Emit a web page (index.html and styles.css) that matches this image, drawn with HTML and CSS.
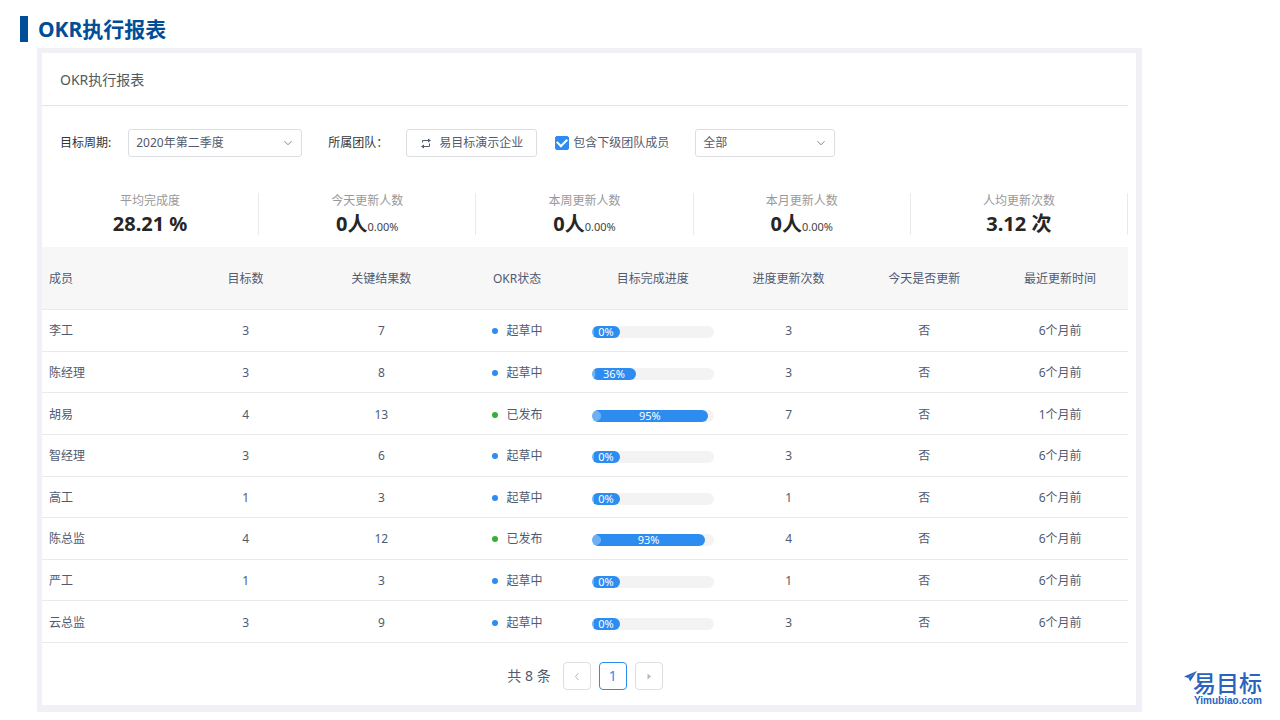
FILE: index.html
```html
<!DOCTYPE html>
<html lang="zh-CN">
<head>
<meta charset="utf-8">
<meta name="viewport" content="width=device-width, initial-scale=1">
<title>OKR执行报表</title>
<link rel="stylesheet" href="styles.css">
</head>
<body>
<div class="page">
  <header class="page-head"><h1 class="page-title">OKR执行报表</h1></header>
  <main class="panel">
    <h2 class="panel-title">OKR执行报表</h2>
    <form class="filters">
      <label class="filter-label" for="period">目标周期:</label>
      <span class="select period">
        <select id="period"><option>2020年第二季度</option></select>
        <svg class="chevron" viewBox="0 0 10 10" aria-hidden="true"><path d="M1.500 3.200 5 6.800 8.500 3.200"/></svg>
      </span>
      <span class="filter-label team-label" id="team-label">所属团队：</span>
      <button class="team" type="button" aria-describedby="team-label">
        <svg class="swap" viewBox="0 0 12 12" aria-hidden="true"><path d="M2.500 5.500v-2H9M3 9.500h6.500v-3"/><path class="solid" d="M8 1.500 11 3.500 8 5.500zM4 7.500 1 9.500 4 11.500z"/></svg>
        <span>易目标演示企业</span>
      </button>
      <label class="check"><input type="checkbox" checked><span>包含下级团队成员</span></label>
      <span class="select scope">
        <select aria-label="范围"><option>全部</option></select>
        <svg class="chevron" viewBox="0 0 10 10" aria-hidden="true"><path d="M1.500 3.200 5 6.800 8.500 3.200"/></svg>
      </span>
    </form>
    <dl class="stats">
      <div class="stat"><dt>平均完成度</dt><dd>28.21 %</dd></div>
      <div class="stat"><dt>今天更新人数</dt><dd>0人<small>0.00%</small></dd></div>
      <div class="stat"><dt>本周更新人数</dt><dd>0人<small>0.00%</small></dd></div>
      <div class="stat"><dt>本月更新人数</dt><dd>0人<small>0.00%</small></dd></div>
      <div class="stat"><dt>人均更新次数</dt><dd>3.12 次</dd></div>
    </dl>
    <table class="report">
      <thead>
        <tr><th>成员</th><th>目标数</th><th>关键结果数</th><th>OKR状态</th><th>目标完成进度</th><th>进度更新次数</th><th>今天是否更新</th><th>最近更新时间</th></tr>
      </thead>
      <tbody>
        <tr><td>李工</td><td>3</td><td>7</td><td><span class="status">起草中</span></td><td><div class="track"><div class="bar" style="width:0%">0%</div></div></td><td>3</td><td>否</td><td>6个月前</td></tr>
        <tr><td>陈经理</td><td>3</td><td>8</td><td><span class="status">起草中</span></td><td><div class="track"><div class="bar" style="width:36%">36%</div></div></td><td>3</td><td>否</td><td>6个月前</td></tr>
        <tr><td>胡易</td><td>4</td><td>13</td><td><span class="status done">已发布</span></td><td><div class="track"><div class="bar" style="width:95%">95%</div></div></td><td>7</td><td>否</td><td>1个月前</td></tr>
        <tr><td>智经理</td><td>3</td><td>6</td><td><span class="status">起草中</span></td><td><div class="track"><div class="bar" style="width:0%">0%</div></div></td><td>3</td><td>否</td><td>6个月前</td></tr>
        <tr><td>高工</td><td>1</td><td>3</td><td><span class="status">起草中</span></td><td><div class="track"><div class="bar" style="width:0%">0%</div></div></td><td>1</td><td>否</td><td>6个月前</td></tr>
        <tr><td>陈总监</td><td>4</td><td>12</td><td><span class="status done">已发布</span></td><td><div class="track"><div class="bar" style="width:93%">93%</div></div></td><td>4</td><td>否</td><td>6个月前</td></tr>
        <tr><td>严工</td><td>1</td><td>3</td><td><span class="status">起草中</span></td><td><div class="track"><div class="bar" style="width:0%">0%</div></div></td><td>1</td><td>否</td><td>6个月前</td></tr>
        <tr><td>云总监</td><td>3</td><td>9</td><td><span class="status">起草中</span></td><td><div class="track"><div class="bar" style="width:0%">0%</div></div></td><td>3</td><td>否</td><td>6个月前</td></tr>
      </tbody>
    </table>
    <nav class="pager" aria-label="分页">
      <span class="total">共 8 条</span>
      <button class="page-btn" type="button" aria-label="上一页" disabled><svg viewBox="0 0 10 10" aria-hidden="true"><path d="M6.500 2 3.500 5.500l3 3.500"/></svg></button>
      <button class="page-btn current" type="button" aria-current="page">1</button>
      <button class="page-btn" type="button" aria-label="下一页" disabled><svg viewBox="0 0 10 10" aria-hidden="true"><path class="solid" d="M3.500 2.500 7 5.500l-3.500 3z"/></svg></button>
    </nav>
  </main>
  <aside class="brand">
    <svg class="plane" viewBox="0 0 13 11" aria-hidden="true"><path d="M13 0 0 5.500l4 1.500zM13 0 4.400 7l1.800 3.500z"/></svg>
    <div class="brand-name">易目标</div>
    <div class="brand-site">Yimubiao.com</div>
  </aside>
</div>
</body>
</html>
```
FILE: styles.css
```css
* { box-sizing: border-box; }

body {
  margin: 0;
  background: #fff;
  color: #515a6e;
  font: 12px/20px "Noto Sans", "Noto Sans CJK SC", sans-serif;
}

button, select, input { font: inherit; color: inherit; margin: 0; }

.page {
  display: grid;
  grid-template-columns: minmax(0, 1fr) 138px;
  grid-template-rows: auto 1fr;
  min-height: 100vh;
  padding: 16px 0 8px 20px;
}

.page-head {
  grid-column: 1 / -1;
  padding-bottom: 6px;
}

.page-title {
  margin: 0;
  padding-left: 10px;
  border-left: 8px solid #004e98;
  color: #004e98;
  font-size: 21px;
  line-height: 26px;
}

.panel {
  display: flex;
  flex-direction: column;
  margin-left: 17px;
  padding-right: 8px;
  border: solid #f0f1f6;
  border-width: 5px 6px 7px 5px;
}

.panel-title {
  margin: 0;
  padding: 16px 18px 14px;
  border-bottom: 1px solid #e3e4e6;
  color: #515a61;
  font-size: 14px;
  font-weight: 400;
  line-height: 22px;
}

.filters {
  display: flex;
  align-items: center;
  padding: 23px 18px 36px;
}

.filter-label { color: #333; }
.team-label { margin-left: 26px; }

.select {
  position: relative;
  display: flex;
}

.period { width: 174px; margin-left: 17px; }
.scope { width: 140px; margin-left: 26px; }

.select select {
  width: 100%;
  height: 28px;
  padding: 0 24px 0 7px;
  appearance: none;
  border: 1px solid #dcdee2;
  border-radius: 3px;
  background: #fff;
}

.chevron {
  position: absolute;
  top: 9px;
  right: 9px;
  width: 10px;
  height: 10px;
  pointer-events: none;
  fill: none;
  stroke: #808695;
}

.team {
  display: flex;
  align-items: center;
  gap: 7px;
  height: 28px;
  margin-left: 18px;
  padding: 0 13px;
  border: 1px solid #dcdee2;
  border-radius: 3px;
  background: #fff;
}

.swap {
  width: 12px;
  height: 12px;
  fill: none;
  stroke: #515a6e;
}

.solid { fill: currentColor; stroke: none; }

.check {
  display: flex;
  align-items: center;
  gap: 4px;
  margin-left: 18px;
}

.check input {
  display: grid;
  place-items: center;
  width: 14px;
  height: 14px;
  appearance: none;
  border: 1px solid #dcdee2;
  border-radius: 2px;
}

.check input:checked { border-color: #2d8cf0; background: #2d8cf0; }

.check input:checked::after {
  content: "";
  width: 8px;
  height: 5px;
  margin-bottom: 3px;
  border: solid #fff;
  border-width: 0 0 2px 2px;
  transform: rotate(-45deg);
}

.stats {
  display: grid;
  grid-template-columns: repeat(5, 1fr);
  margin: 0;
  padding-bottom: 12px;
}

.stat {
  border-right: 1px solid #e8eaec;
  text-align: center;
}

.stat dt { color: #999; line-height: 16px; }

.stat dd {
  height: 26px;
  margin: 0;
  color: #262626;
  font-size: 20px;
  font-weight: 700;
  line-height: 30px;
}

.stat small { font-size: 11px; font-weight: 400; line-height: 1; color: #444; }

.report {
  flex: 1;
  width: 100%;
  table-layout: fixed;
  border-collapse: separate;
  border-spacing: 0;
  text-align: center;
}

.report th {
  height: 63px;
  padding: 2px 0 0;
  border-bottom: 1px solid #e8eaec;
  background: #f7f7f8;
  font-weight: 400;
}

.report td { padding: 2px 7px 0; border-bottom: 1px solid #e8eaec; }
.report th:first-child, .report td:first-child { padding-left: 7px; text-align: left; }

.status {
  display: flex;
  align-items: center;
  justify-content: center;
  gap: 9px;
}

.status::before {
  content: "";
  width: 6px;
  height: 6px;
  border-radius: 50%;
  background: #2d8cf0;
}

.status.done::before { background: #35b034; }

.track {
  height: 12px;
  margin-top: 2px;
  border-radius: 6px;
  background: #f3f3f3;
}

.bar {
  min-width: 28px;
  height: 12px;
  border-radius: 6px;
  background: radial-gradient(ellipse at 0 50%, #6cb0f5 68%, #2d8cf0 74%) 0 0 / 8% 100% no-repeat #2d8cf0;
  color: #fff;
  font-size: 11px;
  line-height: 12px;
}

.pager {
  display: flex;
  justify-content: center;
  align-items: center;
  gap: 8px;
  padding: 19px 0 15px;
}

.total { margin-right: 4px; font-size: 14px; }

.page-btn {
  display: grid;
  place-items: center;
  width: 28px;
  height: 28px;
  padding: 0;
  border: 1px solid #dcdee2;
  border-radius: 4px;
  background: #fff;
  color: #b4b8c0;
  font-size: 14px;
}

.page-btn svg { width: 10px; height: 10px; fill: none; stroke: currentColor; }
.page-btn.current { border-color: #2d8cf0; color: #2d8cf0; }

.brand {
  position: relative;
  align-self: end;
  justify-self: end;
  padding: 0 18px 6px 0;
  color: #2863bf;
}

.brand-name { font-size: 23px; font-weight: 500; line-height: 25px; }

.brand-site {
  font: 700 10px/10px "Liberation Sans", Arial, sans-serif;
  text-align: right;
}

.plane {
  position: absolute;
  top: 0;
  left: -9px;
  width: 13px;
  height: 11px;
  fill: currentColor;
}
```
